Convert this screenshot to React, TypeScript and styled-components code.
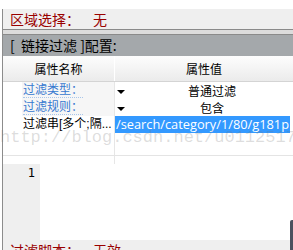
import React from 'react';
import styled, { createGlobalStyle } from 'styled-components';

const GlobalStyle = createGlobalStyle`
    html, body {
        margin: 0;
        padding: 0;
        background: #fff;
    }
    body {
        width: 293px;
        height: 250px;
        overflow: hidden;
        font-family: "Noto Sans CJK SC", "Noto Sans", sans-serif;
    }
`;

const Screen = styled.div`
    position: relative;
    width: 293px;
    height: 250px;
    padding-top: 9px;
    box-sizing: border-box;
    overflow: hidden;
`;
const Panel = styled.div`
    margin-left: 2px;
    border-left: 1px solid #8c8c8c;
    display: flex;
    flex-direction: column;
`;
const InfoLine = styled.div`
    height: 20px;
    line-height: 20px;
    background: #efefef;
    color: #990000;
    font-size: 14px;
    padding-left: 7px;
    white-space: nowrap;
`;
const InfoValue = styled.span`
    margin-left: 13px;
`;
const Rule = styled.div`
    height: 4px;
    background: #dcdcdc;
    border-top: 1px solid #8a8a8a;
    border-bottom: 1px solid #8a8a8a;
`;
const SectionTitle = styled.div`
    height: 21px;
    line-height: 21px;
    background: #a4a8ab;
    color: #000;
    font-size: 14px;
    padding-left: 7px;
    white-space: pre;
`;
const GridHead = styled.div`
    display: grid;
    grid-template-columns: 112px 1fr;
    height: 25px;
    border-bottom: 1px solid #d4d4d4;
    background: linear-gradient(#fdfdfd, #ebebeb);
`;
const HeadCell = styled.div<{ $divider?: boolean }>`
    font-size: 12px;
    line-height: 25px;
    text-align: center;
    color: #000;
    ${({ $divider }) => ($divider ? 'border-right: 1px solid #fff;' : '')}
`;
const Row = styled.div<{ $height?: number; $line?: boolean }>`
    display: grid;
    grid-template-columns: 19px 93px 1fr;
    height: ${({ $height }) => $height || 17}px;
    ${({ $line }) => ($line ? 'border-bottom: 1px solid #e4e4e4;' : '')}
`;
const Gap = styled.div``;
const LabelCell = styled.div<{ $shade?: boolean }>`
    border-right: 1px solid #e6e6e6;
    background: ${({ $shade }) => ($shade ? '#f6f6f6' : '#fff')};
    font-family: "Liberation Sans", "Noto Sans CJK SC", sans-serif;
    font-size: 12px;
    line-height: 17px;
    padding-left: 1px;
    white-space: nowrap;
    overflow: hidden;
`;
const LinkLabel = styled.span`
    color: #3779d0;
    border-bottom: 1px dotted #a9c6ea;
`;
const ValueCell = styled.div<{ $selected?: boolean }>`
    display: flex;
    align-items: center;
    font-size: 12px;
    line-height: 17px;
    white-space: nowrap;
    overflow: hidden;
    ${({ $selected }) =>
        $selected
            ? 'background: #3399ff; color: #fff; padding-left: 1px; margin-right: 3px; font-family: "Open Sans", sans-serif; font-size: 12.8px;'
            : 'color: #000;'}
`;
const DropArrow = styled.span`
    flex: none;
    width: 16px;
    height: 17px;
    position: relative;
    &::after {
        content: '';
        position: absolute;
        left: 2px;
        top: 8px;
        border-left: 4px solid transparent;
        border-right: 4px solid transparent;
        border-top: 4px solid #000;
    }
`;
const ValueText = styled.span`
    flex: 1;
    text-align: center;
`;
const Editor = styled.div`
    display: grid;
    grid-template-columns: 37px 1fr;
    height: 76px;
`;
const Gutter = styled.div`
    background: #efefef;
    text-align: right;
    padding-right: 5px;
    font-family: "DejaVu Sans Mono", monospace;
    font-size: 12px;
    line-height: 17px;
    padding-top: 1px;
    color: #000;
`;
const Code = styled.div`
    background: #fff;
`;
const Footer = styled.div`
    height: 20px;
    line-height: 20px;
    background: #efefef;
    color: #990000;
    font-size: 14px;
    padding-left: 7px;
    white-space: nowrap;
`;
const Watermark = styled.div`
    position: absolute;
    left: 0;
    top: 128px;
    font-family: "Liberation Mono", monospace;
    font-size: 17px;
    line-height: 20px;
    color: rgba(120, 120, 120, 0.25);
    white-space: nowrap;
    pointer-events: none;
`;
const EdgeBar = styled.div`
    position: absolute;
    right: 0;
    top: 220px;
    width: 3px;
    height: 30px;
    background: #4b505e;
    border-top-left-radius: 2px;
`;

const rows = [
    { label: '过滤类型：', value: '普通过滤' },
    { label: '过滤规则：', value: '包含' },
];

export default function App() {
    return (
        <Screen>
            <GlobalStyle />
            <Panel>
                <InfoLine>
                    区域选择：<InfoValue>无</InfoValue>
                </InfoLine>
                <Rule />
                <SectionTitle>{'[  链接过滤 ]配置:'}</SectionTitle>
                <GridHead>
                    <HeadCell $divider>属性名称</HeadCell>
                    <HeadCell>属性值</HeadCell>
                </GridHead>
                {rows.map((r, i) => (
                    <Row key={i}>
                        <Gap />
                        <LabelCell $shade>
                            <LinkLabel>{r.label}</LinkLabel>
                        </LabelCell>
                        <ValueCell>
                            <DropArrow />
                            <ValueText>{r.value}</ValueText>
                        </ValueCell>
                    </Row>
                ))}
                <Row>
                    <Gap />
                    <LabelCell>过滤串[多个;隔...</LabelCell>
                    <ValueCell $selected>/search/category/1/80/g181p</ValueCell>
                </Row>
                <Row $height={22} $line>
                    <Gap />
                    <LabelCell />
                    <Gap />
                </Row>
                <Row $height={8}>
                    <Gap />
                    <LabelCell />
                    <Gap />
                </Row>
                <Editor>
                    <Gutter>1</Gutter>
                    <Code />
                </Editor>
                <Footer>
                    过滤脚本：<InfoValue>无效</InfoValue>
                </Footer>
            </Panel>
            <Watermark>http://blog.csdn.net/u0112517</Watermark>
            <EdgeBar />
        </Screen>
    );
}
